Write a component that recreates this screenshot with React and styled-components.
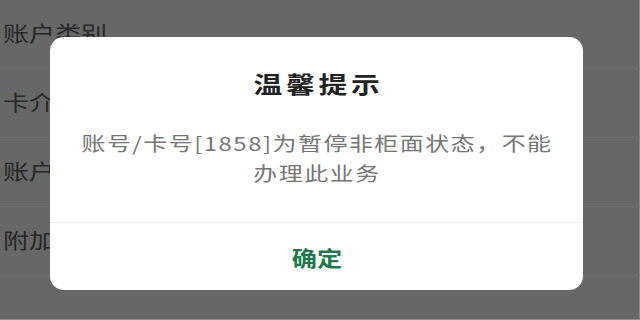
import React from 'react'
import styled, { createGlobalStyle } from 'styled-components'

const GlobalStyle = createGlobalStyle`
    html, body {
        margin: 0;
        padding: 0;
        background: #676767;
    }
    * {
        box-sizing: border-box;
    }
`

const rows = ['账户类别', '卡介质', '账户状态', '附加信息']

const App = () => {
    return (
        <StyledPage>
            <GlobalStyle />
            <StyledList>
                {rows.map((label) => (
                    <StyledRow key={label}>
                        <StyledLabel>{label}</StyledLabel>
                    </StyledRow>
                ))}
            </StyledList>

            <StyledMask>
                <StyledDialog>
                    <StyledTitle>温馨提示</StyledTitle>
                    <StyledMessage>账号/卡号[1858]为暂停非柜面状态，不能办理此业务</StyledMessage>
                    <StyledFooter>
                        <StyledConfirm type="button">确定</StyledConfirm>
                    </StyledFooter>
                </StyledDialog>
            </StyledMask>
        </StyledPage>
    )
}

// 원본 화면이 가로로 늘어나 있어서 글자도 scaleX로 맞춤
const StyledPage = styled.div`
    position: relative;
    width: 640px;
    height: 320px;
    overflow: hidden;
    background: #676767;
    font-family: 'Noto Sans CJK SC', 'Noto Sans', sans-serif;
    box-shadow: inset -1px -1px 0 #8c8c8c;
`

const StyledList = styled.div`
    display: flex;
    flex-direction: column;
`

const StyledRow = styled.div`
    display: flex;
    align-items: center;
    height: 69px;
    padding: 0 0 4px 3px;
    border-bottom: 1px solid #6f6f6f;
`

const StyledLabel = styled.span`
    display: inline-block;
    color: #272727;
    font-size: 21px;
    transform: scaleX(1.24);
    transform-origin: left center;
`

const StyledMask = styled.div`
    position: absolute;
    inset: 0;
    display: flex;
    align-items: flex-start;
    padding: 37px 0 0 50px;
`

const StyledDialog = styled.div`
    display: flex;
    flex-direction: column;
    width: 533px;
    height: 253px;
    background: #ffffff;
    border-radius: 14px;
    overflow: hidden;
`

const StyledTitle = styled.div`
    align-self: center;
    padding-top: 31px;
    line-height: 30px;
    color: #222222;
    font-size: 23px;
    font-weight: 700;
    letter-spacing: 3px;
    text-indent: 3px;
    transform: scaleX(1.25);
`

const StyledMessage = styled.div`
    width: 380px;
    margin: 30px auto 0;
    padding-bottom: 34px;
    line-height: 30px;
    text-align: center;
    color: #767676;
    font-size: 19px;
    letter-spacing: 1.2px;
    transform: scaleX(1.26);
`

const StyledFooter = styled.div`
    flex: 1;
    display: flex;
    align-items: center;
    justify-content: center;
    border-top: 1px solid #f0f0f0;
`

const StyledConfirm = styled.button`
    border: none;
    background: transparent;
    padding: 0;
    color: #1e7a4c;
    font-family: 'Noto Sans CJK SC', 'Noto Sans', sans-serif;
    font-size: 21px;
    font-weight: 700;
    transform: scaleX(1.2);
    cursor: pointer;
`

export default App
